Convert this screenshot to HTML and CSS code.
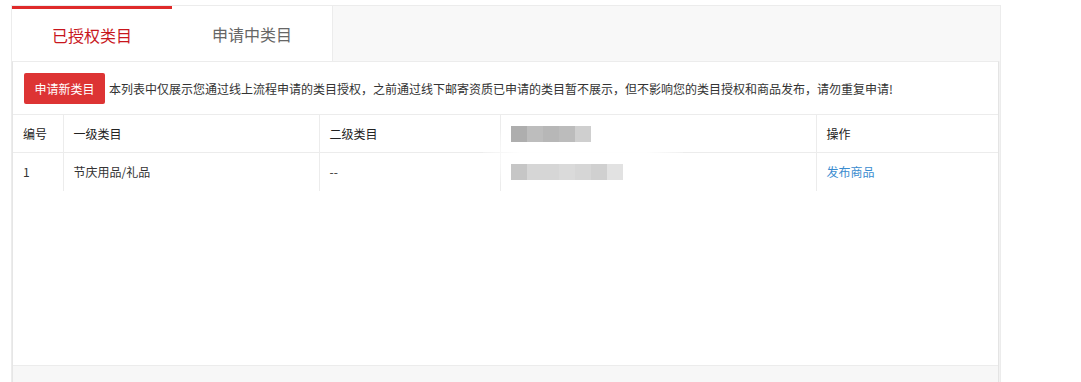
FILE: index.html
```html
<!DOCTYPE html>
<html lang="zh-CN">
<head>
<meta charset="utf-8">
<title>类目授权</title>
<link rel="stylesheet" href="styles.css">
</head>
<body>
<div class="wrap">
  <div class="tabs">
    <div class="tab active">已授权类目</div>
    <div class="tab">申请中类目</div>
  </div>
  <div class="panel">
    <div class="toolbar">
      <button class="btn">申请新类目</button>
      <span class="notice">本列表中仅展示您通过线上流程申请的类目授权，之前通过线下邮寄资质已申请的类目暂不展示，但不影响您的类目授权和商品发布，请勿重复申请!</span>
    </div>
    <div class="table-box">
      <table class="grid">
        <colgroup>
          <col class="c1"><col class="c2"><col class="c3"><col class="c4"><col class="c5">
        </colgroup>
        <thead>
          <tr>
            <th>编号</th>
            <th>一级类目</th>
            <th>二级类目</th>
            <th><span class="pix"><i class="g1"></i><i class="g2"></i><i class="g3"></i><i class="g4"></i><i class="g5"></i></span></th>
            <th>操作</th>
          </tr>
        </thead>
        <tbody>
          <tr>
            <td>1</td>
            <td>节庆用品/礼品</td>
            <td>--</td>
            <td><span class="pix"><i class="h1"></i><i class="h2"></i><i class="h2"></i><i class="h3"></i><i class="h2"></i><i class="h4"></i><i class="h5"></i></span></td>
            <td><a class="link" href="#">发布商品</a></td>
          </tr>
        </tbody>
      </table>
      <div class="haze"></div>
    </div>
    <div class="empty"></div>
    <div class="footer"></div>
  </div>
</div>
</body>
</html>
```

FILE: styles.css
```css
html, body {
  margin: 0;
  padding: 0;
  background: #fff;
  font-family: "Noto Sans CJK SC", "Noto Sans", sans-serif;
  color: #333;
}

.wrap {
  margin: 5px 0 0 11px;
  width: 990px;
  box-sizing: border-box;
  border: 1px solid #ececec;
  border-bottom: none;
  background: #f8f8f8;
}

.tabs {
  display: flex;
  height: 55px;
}

.tab {
  width: 160px;
  box-sizing: border-box;
  display: flex;
  align-items: center;
  justify-content: center;
  background: #fff;
  border-right: 1px solid #ececec;
  font-size: 16px;
  color: #666;
}

.tab + .tab {
  width: 161px;
}

.tab.active {
  border-top: 3px solid #df2a2a;
  border-right: none;
  color: #c8161d;
}

.panel {
  width: 987px;
  box-sizing: border-box;
  background: #fff;
  border-top: 1px solid #ececec;
  border-left: 1px solid #e6e6e6;
  border-right: 1px solid #e4e4e4;
  box-shadow: 1px 0 0 #f2f2f2;
}

.toolbar {
  display: flex;
  align-items: center;
  height: 52px;
  padding: 0 0 0 11px;
  box-sizing: border-box;
}

.btn {
  width: 81px;
  height: 31px;
  margin: 0 4px 0 0;
  padding: 0;
  border: none;
  border-radius: 2px;
  background: #dd3434;
  color: #fff;
  font-family: inherit;
  font-size: 12px;
  cursor: pointer;
}

.notice {
  font-size: 12px;
  color: #333;
  white-space: nowrap;
}

.table-box {
  position: relative;
}

.grid {
  width: 985px;
  border-collapse: collapse;
  table-layout: fixed;
  font-size: 12px;
  color: #333;
}

.c1 { width: 50px; }
.c2 { width: 256px; }
.c3 { width: 181px; }
.c4 { width: 316px; }
.c5 { width: 182px; }

.grid th,
.grid td {
  height: 38px;
  padding: 0 10px;
  box-sizing: border-box;
  text-align: left;
  border-top: 1px solid #ececec;
  border-left: 1px solid #ececec;
  vertical-align: middle;
}

.grid th {
  font-weight: 400;
  color: #222;
}

.grid th:first-child,
.grid td:first-child {
  border-left: none;
}

.pix {
  position: relative;
  z-index: 2;
  display: flex;
  height: 16px;
}

.pix i {
  display: block;
  width: 16px;
  height: 16px;
}

.g1 { background: #aeaeae; }
.g2 { background: #bdbdbd; }
.g3 { background: #b7b7b7; }
.g4 { background: #bcbcbc; }
.g5 { background: #cfcfcf; }
.h1 { background: #c6c6c6; }
.h2 { background: #d6d6d6; }
.h3 { background: #dadada; }
.h4 { background: #d0d0d0; }
.h5 { background: #e2e2e2; }

.link {
  color: #3a8ccf;
  text-decoration: none;
}

.haze {
  position: absolute;
  z-index: 1;
  left: 470px;
  top: 4px;
  width: 200px;
  height: 76px;
  background: radial-gradient(ellipse at center, rgba(255,255,255,0.95) 45%, rgba(255,255,255,0) 78%);
  pointer-events: none;
}

.empty {
  height: 174px;
}

.footer {
  height: 30px;
  border-top: 1px solid #ececec;
  background: #f7f7f7;
}
```
